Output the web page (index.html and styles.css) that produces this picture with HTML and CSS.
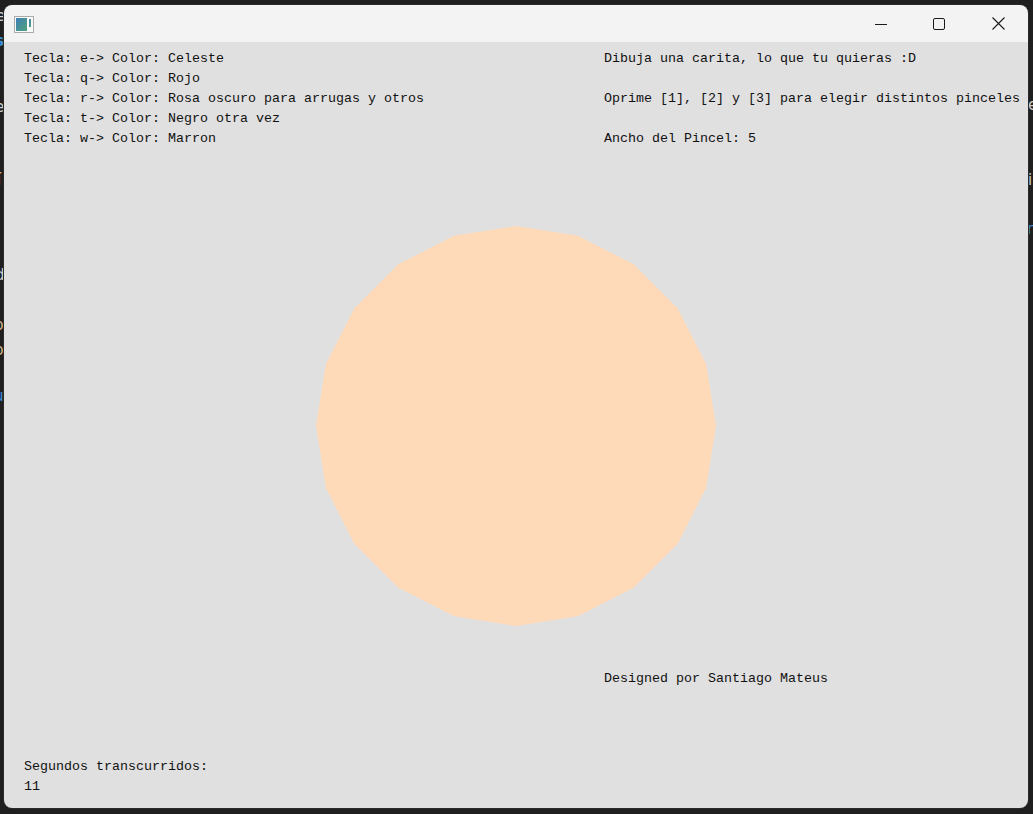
FILE: index.html
```html
<!DOCTYPE html>
<html lang="es">
<head>
<meta charset="utf-8">
<title>Carita</title>
<link rel="stylesheet" href="styles.css">
</head>
<body>
<div class="desk">
  <span class="frag f1">e</span>
  <span class="frag f2 blue">s</span>
  <span class="frag f3 blue">╮</span>
  <span class="frag f4">e</span>
  <span class="frag f5 blue">╮</span>
  <span class="frag f6 warm">í</span>
  <span class="frag f7 blue">╮</span>
  <span class="frag f8">d</span>
  <span class="frag f9 warm">p</span>
  <span class="frag f10 warm">p</span>
  <span class="frag f11 blue">u</span>
  <span class="frag r1">i</span>
  <span class="frag r2 blue">n</span>
  <span class="frag r3">e</span>
</div>
<div class="window">
  <div class="titlebar">
    <svg class="appicon" width="20" height="17" viewBox="0 0 20 17">
      <defs>
        <linearGradient id="g" x1="0" y1="0" x2="1" y2="1">
          <stop offset="0" stop-color="#3f7fb8"/>
          <stop offset="1" stop-color="#4fa27a"/>
        </linearGradient>
      </defs>
      <rect x="0.5" y="0.5" width="19" height="16" fill="#fafafa" stroke="#a9a9a9"/>
      <rect x="2" y="2" width="11" height="13" fill="url(#g)"/>
      <rect x="15" y="3" width="2" height="8" fill="url(#g)"/>
    </svg>
    <div class="controls">
      <span class="ctl">
        <svg width="12" height="12" viewBox="0 0 12 12"><path d="M0 6.5H12" stroke="#1a1a1a" stroke-width="1"/></svg>
      </span>
      <span class="ctl">
        <svg width="12" height="12" viewBox="0 0 12 12"><rect x="0.5" y="0.5" width="11" height="11" rx="1.5" fill="none" stroke="#1a1a1a" stroke-width="1"/></svg>
      </span>
      <span class="ctl">
        <svg width="13" height="13" viewBox="0 0 13 13"><path d="M0.5 0.5L12.5 12.5M12.5 0.5L0.5 12.5" stroke="#1a1a1a" stroke-width="1.1"/></svg>
      </span>
    </div>
  </div>
  <div class="client">
    <svg class="face" width="400" height="400" viewBox="0 0 400 400">
      <polygon fill="#ffdab9" points="200,0 261.8,9.8 317.6,38.2 361.8,82.4 390.2,138.2 400,200 390.2,261.8 361.8,317.6 317.6,361.8 261.8,390.2 200,400 138.2,390.2 82.4,361.8 38.2,317.6 9.8,261.8 0,200 9.8,138.2 38.2,82.4 82.4,38.2 138.2,9.8"/>
    </svg>
    <div class="top">
      <div class="col left">
        <p class="line">Tecla: e-&gt; Color: Celeste</p>
        <p class="line">Tecla: q-&gt; Color: Rojo</p>
        <p class="line">Tecla: r-&gt; Color: Rosa oscuro para arrugas y otros</p>
        <p class="line">Tecla: t-&gt; Color: Negro otra vez</p>
        <p class="line">Tecla: w-&gt; Color: Marron</p>
      </div>
      <div class="col right">
        <p class="line">Dibuja una carita, lo que tu quieras :D</p>
        <p class="line"></p>
        <p class="line">Oprime [1], [2] y [3] para elegir distintos pinceles</p>
        <p class="line"></p>
        <p class="line">Ancho del Pincel: 5</p>
      </div>
    </div>
    <p class="line credit">Designed por Santiago Mateus</p>
    <div class="timer">
      <p class="line">Segundos transcurridos:</p>
      <p class="line">11</p>
    </div>
  </div>
</div>
</body>
</html>
```

FILE: styles.css
```css
html, body {
  margin: 0;
  padding: 0;
}
body {
  background: #1f1f1f;
  width: 1033px;
  height: 814px;
  overflow: hidden;
  position: relative;
  font-family: "Liberation Mono", "DejaVu Sans Mono", monospace;
}
.desk {
  position: absolute;
  inset: 0;
}
.frag {
  position: absolute;
  font-family: "DejaVu Sans", sans-serif;
  font-size: 15px;
  line-height: 15px;
  color: #cfcfcf;
}
.frag.blue { color: #3c8fd8; }
.frag.warm { color: #d7b98a; }
.f1 { left: -4px; top: 9px; }
.f2 { left: -5px; top: 34px; font-weight: bold; }
.f3 { left: -7px; top: 148px; }
.f4 { left: -5px; top: 100px; }
.f5 { left: -7px; top: 222px; }
.f6 { left: -3px; top: 173px; }
.f7 { left: -7px; top: 388px; }
.f8 { left: -5px; top: 268px; }
.f9 { left: -6px; top: 318px; }
.f10 { left: -6px; top: 343px; }
.f11 { left: -6px; top: 389px; }
.r1 { left: 1028px; top: 173px; }
.r2 { left: 1027px; top: 222px; }
.r3 { left: 1028px; top: 98px; }

.window {
  position: absolute;
  left: 4px;
  top: 5px;
  width: 1024px;
  height: 803px;
  border-radius: 8px;
  overflow: hidden;
  display: flex;
  flex-direction: column;
  box-shadow: 0 0 0 1px #2a2a2a;
}
.titlebar {
  height: 37px;
  flex: none;
  background: #f3f3f3;
  display: flex;
  align-items: center;
  justify-content: space-between;
}
.appicon {
  margin-left: 10px;
  margin-top: 1px;
  display: block;
}
.controls {
  display: flex;
  height: 100%;
}
.ctl {
  width: 58px;
  display: flex;
  align-items: center;
  justify-content: center;
}
.ctl:last-child {
  width: 60px;
}
.ctl svg { display: block; }

.client {
  flex: 1;
  background: #e0e0e0;
  position: relative;
  display: flex;
  flex-direction: column;
  padding-top: 7px;
  color: #111;
  font-size: 13.333px;
}
.face {
  position: absolute;
  left: 312px;
  top: 184px;
  display: block;
}
.top {
  display: flex;
  position: relative;
}
.col.left {
  width: 580px;
  padding-left: 20px;
}
.line {
  margin: 0;
  height: 20px;
  line-height: 20px;
  white-space: pre;
}
.credit {
  position: relative;
  margin-top: 520px;
  padding-left: 600px;
}
.timer {
  position: relative;
  margin-top: auto;
  padding-left: 20px;
  padding-bottom: 11px;
}
```
